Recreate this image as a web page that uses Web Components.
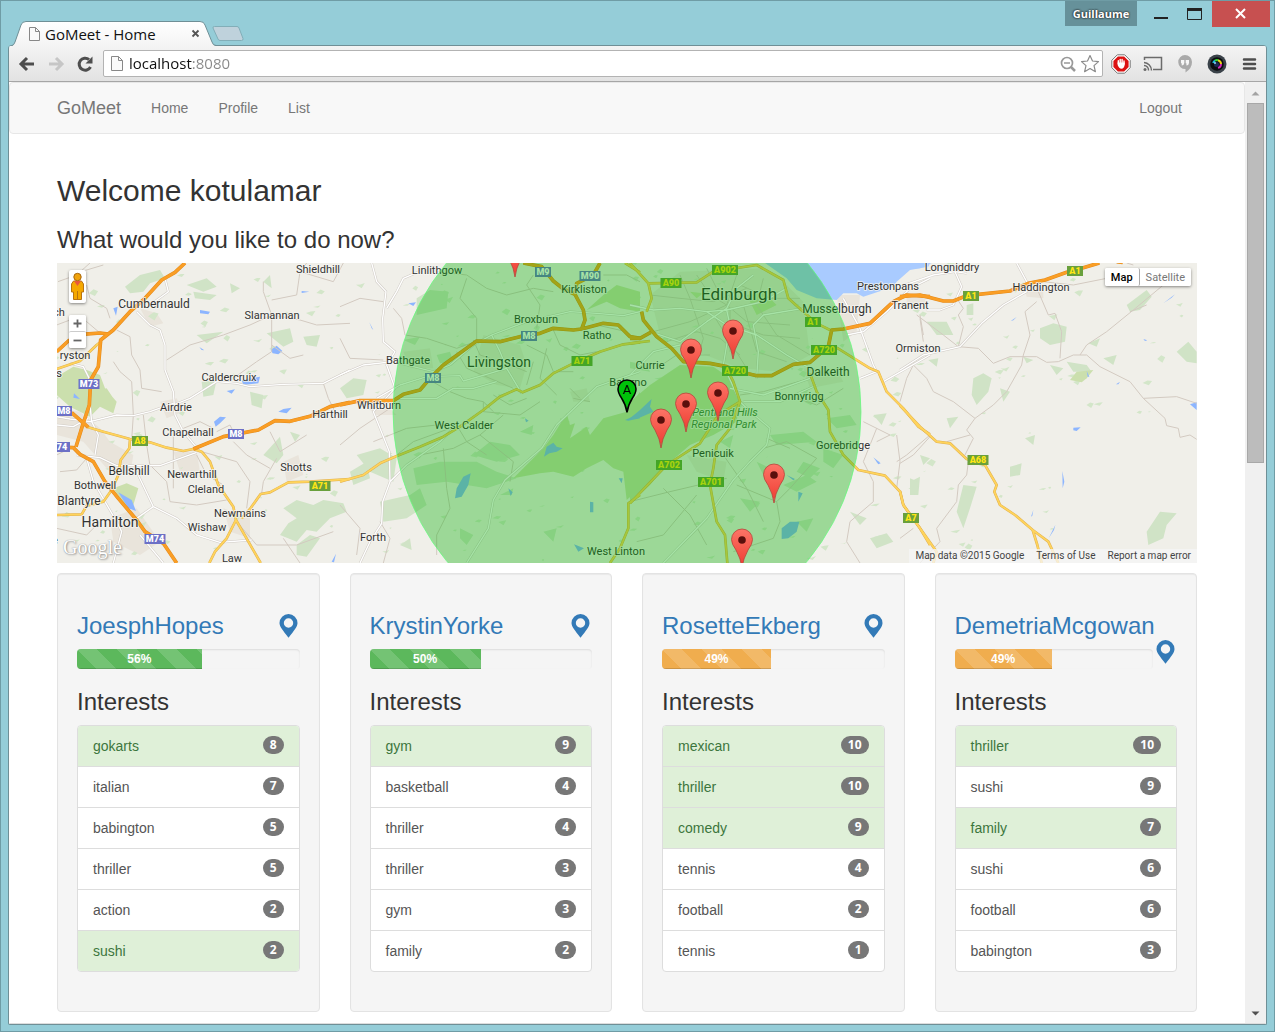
<!DOCTYPE html>
<html lang="en">
<head>
<meta charset="utf-8">
<title>GoMeet - Home</title>
<style>
  html, body { margin: 0; height: 100%; }
  body { font: 14px/20px "Liberation Sans", Arial, sans-serif; color: #333; background: #95cdd8; }
</style>
</head>
<body>
<browser-window tab-title="GoMeet - Home" user="Guillaume" address="localhost:8080">
  <site-navbar></site-navbar>
  <home-page></home-page>
</browser-window>

<script>
function component(name, css, html, setup) {
  const template = document.createElement('template');
  template.innerHTML = '<style>*{box-sizing:border-box}' + css + '</style>' + html;
  customElements.define(name, class extends HTMLElement {
    constructor() {
      super();
      this.attachShadow({ mode: 'open' }).append(template.content.cloneNode(true));
    }
    connectedCallback() { if (setup) setup.call(this, this.shadowRoot); }
  });
}

/* ---------- browser frame ---------- */

component('tab-strip', `
  :host { display: flex; align-items: flex-end; height: 45px; padding-left: 11px; padding-right: 4px; }
  .tab { display: grid; width: 204px; height: 25px; margin-bottom: -1px; position: relative; z-index: 1; }
  .tab > * { grid-area: 1 / 1; }
  .label { display: flex; align-items: center; padding: 0 16px; font: 15px/20px "Open Sans", sans-serif; color: #111; }
  .label svg { flex: none; }
  .label span { flex: 1; padding-left: 4px; white-space: nowrap; }
  button { border: 0; padding: 0; background: none; display: block; }
  .new { margin: 0 auto 4px -4px; }
  .controls { display: flex; align-self: flex-start; align-items: flex-start; }
  .user { height: 25px; width: 72px; background: #66919a; color: #fff; font: bold 11px/25px "Open Sans", sans-serif;
    text-shadow: 0 0 2px #222, 0 0 2px #222; text-align: center; }
  .win { width: 34px; height: 26px; }
  .controls .min { margin-left: 7px; }
  .close { width: 58px; height: 26px; background: #c75050; }
  .x { width: 9px; height: 20px; }
`, `
  <div class="tab">
    <svg width="204" height="25" viewBox="0 0 204 25">
      <defs><linearGradient id="g" x2="0" y2="1"><stop stop-color="#fff"/><stop offset="1" stop-color="#f4f4f4"/></linearGradient></defs>
      <path d="M0 25Q2 24 3 21L9 4Q10 .5 14 .5H188Q192 .5 193 4L200 21Q201 24.500 204 25Z" fill="url(#g)"/>
      <path d="M0 24.500Q2 24 3 21L9 4Q10 .5 14 .5H188Q192 .5 193 4L200 21Q201 24.500 204 24.500" fill="none" stroke="#6f8f96"/>
    </svg>
    <div class="label">
      <svg width="13" height="16" viewBox="0 0 13 16"><path d="M1.500 1.500H7.500L11.500 5.500V14.500H1.500Z" fill="#fafafa" stroke="#888"/><path d="M7.500 1.500V5.500H11.500" fill="none" stroke="#888"/></svg>
      <span></span>
      <button class="x" aria-label="Close tab"><svg width="9" height="9" viewBox="0 0 9 9"><path d="M1.500 1.500L7.500 7.500M7.500 1.500L1.500 7.500" stroke="#555" stroke-width="1.800"/></svg></button>
    </div>
  </div>
  <button class="new" aria-label="New tab"><svg width="32" height="15" viewBox="0 0 32 15" style="display:block"><path d="M2.500 .5H25Q26.500 .5 27 2L31 12.500Q31.500 14.500 29.500 14.500H8Q6.500 14.500 6 13L1 2Q.5 .5 2.500 .5Z" fill="#bfd2dc" stroke="#82aeb8"/></svg></button>
  <div class="controls">
    <button class="user"></button>
    <button class="win min" aria-label="Minimize"><svg width="34" height="26"><path d="M10 17H24" stroke="#222" stroke-width="2"/></svg></button>
    <button class="win max" aria-label="Maximize"><svg width="34" height="26"><path d="M9.500 18.500V8H23.500V18.500Z" fill="none" stroke="#222"/><path d="M9 8.500H24" stroke="#222" stroke-width="3"/></svg></button>
    <button class="close" aria-label="Close"><svg width="58" height="26"><path d="M24 8L33 17M33 8L24 17" stroke="#fff" stroke-width="2"/></svg></button>
  </div>
`);

component('tool-bar', `
  :host { display: flex; align-items: center; gap: 12px; height: 37px; padding: 0 7px 0 8px;
    background: linear-gradient(#f4f4f4, #e2e2e2); border: 1px solid #6f8f96; border-width: 1px 0; border-bottom-color: #a6a6a6; }
  button { border: 0; padding: 0; background: none; width: 20px; height: 20px; flex: none; }
  svg { display: block; }
  .nav { display: flex; gap: 9px; margin-right: -4px; }
  label { flex: 1; display: flex; align-items: center; gap: 2px; height: 27px; margin-right: -4px; padding: 0 2px 0 6px; background: #fff; border: 1px solid #b3b3b3; border-radius: 2px; }
  input { flex: 1; min-width: 0; border: 0; padding: 0 0 2px 3px; outline: 0; height: 24px; font: 15px/22px "Open Sans", sans-serif;
    background: linear-gradient(90deg, #111 66px, #888 66px) text; color: transparent; }
`, `
  <div class="nav">
    <button aria-label="Back"><svg width="20" height="20"><path d="M17 10H4M10 4L4 10L10 16" fill="none" stroke="#4e4e4e" stroke-width="3"/></svg></button>
    <button aria-label="Forward"><svg width="20" height="20"><path d="M3 10H16M10 4L16 10L10 16" fill="none" stroke="#c6c6c6" stroke-width="3"/></svg></button>
    <button aria-label="Reload"><svg width="20" height="20"><path d="M15.500 13A6 6 0 1 1 14 5.500" fill="none" stroke="#4e4e4e" stroke-width="3"/><path d="M17.500 2.500V9.500H10.500Z" fill="#4e4e4e"/></svg></button>
  </div>
  <label aria-label="Address">
    <svg width="14" height="18" viewBox="0 0 14 18"><path d="M1.500 1.500H8.500L12.500 5.500V15.500H1.500Z" fill="#fafafa" stroke="#888"/><path d="M8.500 1.500V5.500H12.500" fill="none" stroke="#888"/></svg>
    <input type="text">
    <button aria-label="Zoom out"><svg width="20" height="20"><circle cx="9" cy="9" r="5.500" fill="none" stroke="#999" stroke-width="1.700"/><path d="M6 9H12" stroke="#999" stroke-width="1.500"/><path d="M13 13L17 17" stroke="#999" stroke-width="2.500"/></svg></button>
    <button aria-label="Bookmark"><svg width="20" height="20"><path d="M10 1.500L12.500 7L18.500 7.600L14 11.600L15.400 17.700L10 14.500L4.600 17.700L6 11.600L1.500 7.600L7.500 7Z" fill="#fff" stroke="#8b8b8b" stroke-width="1.200" stroke-linejoin="round"/></svg></button>
  </label>
  <button aria-label="Ad blocker"><svg width="20" height="20"><path d="M6.300 .8H13.700L19.200 6.300V13.700L13.700 19.200H6.300L.8 13.700V6.300Z" fill="#fff" stroke="#777"/><path d="M6.900 2.400H13.100L17.600 6.900V13.100L13.100 17.600H6.900L2.400 13.100V6.900Z" fill="#dc1212"/><path d="M7.300 9.500V6.800M9.200 9V5.500M11.100 9V5.500M13 10V7" stroke="#fff" stroke-width="1.400" stroke-linecap="round"/><path d="M6.600 8.500H13.700V11Q13 14.500 10.500 14.700Q8 14.500 6.600 11Z" fill="#fff"/></svg></button>
  <button aria-label="Cast"><svg width="20" height="20"><path d="M1.500 6V3.500H18.500V15.500H10" fill="none" stroke="#6b6b6b" stroke-width="1.500"/><circle cx="2" cy="15.500" r="1.500" fill="#6b6b6b"/><path d="M1 11.500A4.500 4.500 0 0 1 5.500 16.500M1 8.500A8 8 0 0 1 8.500 16.500" fill="none" stroke="#6b6b6b" stroke-width="1.400"/></svg></button>
  <button aria-label="Hangouts"><svg width="20" height="20"><path d="M10 1A7 7 0 0 1 17 8Q17 14.500 10.500 18.500V15A7 7 0 1 1 10 1Z" fill="#aaa"/><path d="M6 6H9.300V9Q9 11.500 6.700 11.500V9.300H6ZM10.700 6H14V9Q13.700 11.500 11.400 11.500V9.300H10.700Z" fill="#f6f6f6"/></svg></button>
  <button aria-label="Camera"><svg width="20" height="20"><circle cx="10" cy="10" r="9.500" fill="#3a4249"/><circle cx="10" cy="10" r="6.800" fill="#0b0d10"/><g fill="none" stroke-width="2"><path d="M6.200 9A4 4 0 0 1 8 6.600" stroke="#18b7d8"/><path d="M8 6.600A4 4 0 0 1 11 6.200" stroke="#35d435"/><path d="M11 6.200A4 4 0 0 1 14 10" stroke="#e8d219"/><path d="M14 10A4 4 0 0 1 11 13.900" stroke="#d629b8"/></g><circle cx="9.500" cy="10.500" r="2.500" fill="#1d2a55"/><circle cx="8" cy="9" r="1" fill="#8fd7ff"/></svg></button>
  <button aria-label="Menu"><svg width="20" height="20"><path d="M5 5.500H16M5 10H16M5 14.500H16" stroke="#4e4e4e" stroke-width="2.500" stroke-linecap="round"/></svg></button>
`);

component('page-scrollbar', `
  :host { display: flex; flex-direction: column; width: 21px; padding: 1px 2px 0; background: #f0f0f0; }
  button { border: 0; padding: 0; height: 20px; background: none; flex: none; }
  svg { display: block; margin: auto; }
  .track { flex: 1; }
  .thumb { height: 40%; background: #bcbcbc; border: 1px solid #a8a8a8; }
`, `
  <button aria-label="Scroll up"><svg width="9" height="5"><path d="M.5 4.500L4.500 .5L8.500 4.500Z" fill="#a3a3a3"/></svg></button>
  <div class="track"><div class="thumb"></div></div>
  <button aria-label="Scroll down"><svg width="9" height="5"><path d="M.5 .5H8.500L4.500 4.500Z" fill="#505050"/></svg></button>
`);

component('browser-window', `
  :host { display: flex; flex-direction: column; height: 100vh; box-sizing: border-box; border: 1px solid #6f9ca5; padding-bottom: 6px; background: #95cdd8; }
  tab-strip { margin-top: -1px; padding-top: 1px; box-sizing: border-box; flex: none; }
  .frame { flex: 1; min-height: 0; display: flex; flex-direction: column; margin: 0 7px; border: 1px solid #6f8f96; border-top: 0; border-radius: 4px 4px 2px 2px; overflow: hidden; }
  .view { flex: 1; min-height: 0; display: flex; background: #fff; border-bottom: 1px solid #ddd; }
  .page { flex: 1; min-width: 0; overflow: hidden; }
`, `
  <tab-strip></tab-strip>
  <div class="frame">
    <tool-bar></tool-bar>
    <div class="view"><div class="page"><slot></slot></div><page-scrollbar></page-scrollbar></div>
  </div>
`, function (root) {
  const strip = root.querySelector('tab-strip').shadowRoot, bar = root.querySelector('tool-bar').shadowRoot;
  strip.querySelector('.label span').textContent = this.getAttribute('tab-title');
  strip.querySelector('.user').textContent = this.getAttribute('user');
  bar.querySelector('input').value = this.getAttribute('address');
});

/* ---------- site ---------- */

component('site-navbar', `
  :host { display: block; margin-bottom: 20px; background: #f8f8f8; border: 1px solid #e7e7e7; border-radius: 4px; }
  nav { display: flex; max-width: 1140px; margin: 0 auto; height: 50px; align-items: center; }
  a { color: #777; text-decoration: none; padding: 15px; }
  .brand { font-size: 18px; padding-left: 0; }
  .end { margin-left: auto; }
`, `<nav><a class="brand" href="#">GoMeet</a><a href="#home">Home</a><a href="#profile">Profile</a><a href="#list">List</a><a class="end" href="#logout">Logout</a></nav>`);

component('interest-list', `
  :host { display: block; }
  ul { list-style: none; margin: 0; padding: 0; border: 1px solid #ddd; border-radius: 4px; overflow: hidden; background: #fff; color: #555; }
  li { display: flex; justify-content: space-between; align-items: flex-start; padding: 10px 15px; }
  li + li { border-top: 1px solid #ddd; }
  li.shared { background: #dff0d8; color: #3c763d; }
  .badge { padding: 3px 7px; font: bold 12px/12px "Open Sans", sans-serif; color: #fff; background: #777; border-radius: 10px; }
`, `<ul></ul>`, function (root) {
  const ul = root.querySelector('ul');
  for (const item of this.getAttribute('items').split(',')) {
    const [name, count] = item.split(':');
    const li = document.createElement('li');
    const label = document.createElement('span'), badge = document.createElement('span');
    if (name.startsWith('*')) li.className = 'shared';
    label.textContent = name.replace('*', '');
    badge.textContent = count;
    badge.className = 'badge';
    li.append(label, badge);
    ul.append(li);
  }
});

component('person-card', `
  :host { display: block; background: #f5f5f5; border: 1px solid #e3e3e3; border-radius: 4px; padding: 39px 19px;
    box-shadow: inset 0 1px 1px rgba(0,0,0,.05); }
  h3 { margin: 0 0 10px; font-size: 24px; line-height: 26px; font-weight: normal; }
  a { color: #337ab7; text-decoration: none; }
  .pin { float: right; }
  .pin svg { display: block; }
  .progress { height: 20px; margin-bottom: 20px; overflow: hidden; border-radius: 4px; background: #f5f5f5; box-shadow: inset 0 1px 2px rgba(0,0,0,.1); }
  .bar { height: 20px; color: #fff; text-align: center; font: bold 12px/20px "Liberation Sans", sans-serif; background-color: #5cb85c;
    background-image: linear-gradient(45deg, rgba(255,255,255,.15) 25%, transparent 25%, transparent 50%, rgba(255,255,255,.15) 50%, rgba(255,255,255,.15) 75%, transparent 75%);
    background-size: 40px 40px; box-shadow: inset 0 -1px 0 rgba(0,0,0,.15); }
  .bar.low { background-color: #f0ad4e; }
`, `
  <h3><a class="name" href="#person"></a><a class="pin" href="#map" aria-label="Show on map"><svg width="24" height="25"><path fill-rule="evenodd" d="M12.500 1A9 9 0 0 1 21.500 10C21.500 13.500 18.500 17 12.500 24.800C6.500 17 3.500 13.500 3.500 10A9 9 0 0 1 12.500 1ZM12.500 5.300A4.700 4.700 0 1 0 12.500 14.700A4.700 4.700 0 1 0 12.500 5.300Z" fill="#337ab7"/></svg></a></h3>
  <div class="progress"><div class="bar" role="progressbar" aria-valuemin="0" aria-valuemax="100"></div></div>
  <h3>Interests</h3>
  <slot></slot>
`, function (root) {
  const match = Number(this.getAttribute('match'));
  const bar = root.querySelector('.bar');
  root.querySelector('.name').textContent = this.getAttribute('name');
  bar.textContent = match + '%';
  bar.style.width = match + '%';
  bar.setAttribute('aria-valuenow', match);
  bar.classList.toggle('low', match < 50);
});

/* ---------- map ---------- */

/* Four tiles, each drawn at three units per pixel: x offset and layers. */
const TILES = [
  { x: -7,
    urban: 'M20 460L90 470L150 520L180 560L250 600L240 660L170 640L100 560L20 540ZM270 160L320 175L340 205L300 215ZM330 440L380 430L400 470L350 490ZM180 790L260 760L330 860L270 900L190 860ZM520 760L600 790L600 850L540 830ZM370 590L440 590L450 650L390 650ZM700 620L745 600L760 660L710 680Z',
    wood: 'M225 95L270 60L330 45L345 70L300 85L280 110L240 115ZM410 90L470 70L500 95L460 110ZM430 110L500 120L480 135L435 130ZM455 380L500 375L490 420L460 425ZM600 410L640 420L635 460L605 450ZM640 600L690 545L700 600L680 625ZM700 760L740 735L790 750L820 735L880 745L890 770L840 790L800 830L770 825L740 860L690 840L715 805L740 790ZM740 870L780 840L810 850L770 905L740 900ZM540 85L570 100L545 115ZM640 80L660 60L665 100ZM440 240L520 230L470 265ZM650 235L720 220L730 260L700 275ZM760 245L810 240L800 275L770 270ZM720 530L750 540L735 560Z',
    park: 'M20 365L70 335L110 345L150 360L165 400L200 440L190 475L150 455L120 485L60 455L20 420ZM190 700L230 685L265 700L250 750L220 745ZM130 410L170 400L190 430L150 445Z',
    water: 'M205 712L245 735L258 768L235 760ZM450 165L480 170L475 178L450 175ZM662 285L680 272L697 288L685 298L668 295ZM492 500L510 485L528 487L510 505L497 515ZM685 470L700 462L725 458L710 475ZM575 375L630 365L625 385L580 390ZM530 408L555 403L545 416ZM190 160L203 155L198 182ZM72 415L90 432L70 428ZM755 108L778 110L755 114ZM845 920L858 896L852 922ZM448 276L463 286L455 285Z',
    minor: 'M20 210L60 195L110 200L150 234M110 90L120 130L170 160L180 190M200 225L240 245L245 300L270 345L275 400L335 410M190 320L210 350L245 380L250 480L245 555M350 315L420 270L520 240L600 210L665 180L750 195L800 210L900 205M640 80L640 110L665 180L665 290L620 320L550 370M665 135L740 120L750 50L770 24M750 50L850 80L880 24M665 270L720 310L760 300M820 385L835 430L860 480M500 530L540 510L560 550M400 520L450 500L490 520M550 560L590 600L660 640M660 530L690 590L770 540M680 610L640 680L635 715M440 600L470 660L520 690M20 600L60 580M30 650L80 645L110 610M280 480L290 570L300 632M370 530L370 700M455 590L560 620L600 680L590 760M560 800L620 870L740 870L850 830M20 720L90 740M20 820L110 840L150 800M300 630L350 680L360 740L440 750L530 735M700 850L750 924M60 60L160 30M24 80L80 60L120 24',
    white: 'M260 170L300 210L330 225L345 270L345 345L370 410L375 480L400 530L450 590M370 450L420 430L500 380L560 385L600 395L700 388L820 385L900 345M20 485L60 492L120 500L200 480L250 482L300 470L370 445M20 510L70 515L115 490M80 600L150 608L200 632L330 632L440 592M120 450L125 500L145 540L135 600M110 610L130 680L165 740L200 800L215 830L190 924M260 790L310 755L380 790L440 840L510 862L605 855M270 840L340 924M260 650L310 755M60 325L100 335L120 375M345 70L355 110L300 150',
    yellow: 'M115 517L160 530L240 552L300 562L350 578L400 588L430 582L455 590L480 620L505 690L550 755L558 795L530 850L495 890L478 924M558 795L632 924M575 790L600 762L632 717L660 712L715 682L780 680L900 672M240 552L238 580L212 615L205 660L185 705L160 740L110 752L95 778L20 780M20 342L90 318L140 270L155 258',
    orange: 'M405 24L375 52L335 75L285 130L240 170L190 225L152 255L145 335L122 375L118 450L98 510L78 575M20 290L55 258L95 238L150 234L175 237M65 473L115 517M430 582L520 545L625 525L675 497L720 499L780 484L840 455L900 442M50 577L70 578L90 598L130 620L165 680L205 730L260 795L285 830L340 865L380 924' },
  { x: 283,
    urban: 'M430 240L540 270L560 330L540 400L470 390L400 350ZM60 440L140 450L170 480L110 480ZM690 410L740 400L750 440L700 440ZM190 290L270 280L280 340L210 340Z',
    wood: 'M230 130L270 105L325 110L320 160L230 180ZM0 400L40 370L80 375L70 420L20 430ZM50 600L120 580L170 610L160 680L90 650ZM220 640L300 620L410 620L470 650L530 670L440 700L320 680L230 690ZM400 600L450 560L510 570L540 600L470 620ZM120 740L210 720L240 700L260 750L200 790L130 800ZM30 650L80 620L90 670L40 690ZM290 300L330 290L340 320L300 325ZM190 255L240 245L225 270ZM540 530L580 510L575 540ZM360 820L400 840L380 870L360 850ZM610 830L650 820L640 860ZM180 870L210 850L215 885ZM660 490L690 500L670 520ZM480 720L520 700L515 720Z',
    park: 'M520 670L610 580L640 540L680 475L690 510L705 505L690 550L740 515L750 540L790 490L860 470L900 410L900 700L860 735L850 650L820 640L790 615L740 640L700 665L640 650L600 655ZM740 165L790 120L830 90L900 110L900 170L840 160L800 140Z',
    water: 'M345 730L350 700L370 665L392 655L385 690L365 725ZM612 605L620 575L640 563L650 575L668 580L650 590L628 595ZM205 145L228 142L220 153ZM505 700L518 712L512 723ZM750 740L760 742L760 772L750 772ZM702 868L732 880L715 890ZM836 670L848 670L845 685ZM88 202L100 225L95 220ZM555 490L566 497L558 502ZM855 495L895 478L900 490L865 497Z',
    minor: 'M0 155L60 130L130 140M160 160L185 190L195 240L260 250L350 280L420 255M0 250L30 310L130 315M290 50L380 60L440 100L500 120L580 100L640 110M380 70L360 130L410 190L410 255M580 60L560 90L600 150L590 220M640 225L660 270L720 300L770 290M400 255L420 300L510 330L560 350M350 290L380 340L450 370L520 400M260 370L330 410L380 430L430 440L460 470M560 270L620 300L640 350L700 350M580 320L560 390M620 280L600 370L650 420M430 440L430 470L540 480L600 440M460 420L510 450L560 430M0 570L60 520L180 440M100 560L200 520L290 510M170 600L220 560L330 520M240 600L340 580L420 540L490 480M350 510L380 560L440 600M310 580L320 700L330 760L290 840L290 900M0 750L60 820L50 900M120 800L150 850L130 924M420 540L520 620L510 680M720 430L690 400M770 210L860 230M700 430L750 440M790 60L860 60L900 80',
    white: 'M95 24L110 80L138 110L128 190L130 260L165 290L140 330L165 400L100 470L120 520L148 590L150 680L128 740L125 805L90 860L60 924M140 160L170 110L190 70L260 40M0 360L70 330L160 320L280 350L330 330L400 270L455 240L560 200L690 170L770 175L850 182L900 170M455 240L480 290L500 340L545 415M110 430L180 390L260 365L360 362L370 378L450 355L500 340M165 430L290 430L340 400L400 400L470 380M380 924L445 820L460 735L495 675L605 580L650 510L770 395L900 350M150 680L200 630L300 560L340 520',
    yellow: 'M0 680L70 660L120 625L165 605L240 575L310 545L360 515L430 465L480 425L530 403L548 412L600 390L640 355L700 325L780 290L850 268L900 262M810 924L840 880L865 820L865 745L900 720M855 24L900 52',
    orange: 'M0 450L60 437L160 437L190 418L240 405L270 370L310 330L410 258L480 260L540 245L600 235L640 220L700 225L725 222L735 195L730 165L705 118L710 85L760 60L780 24M550 24L605 35L640 78L670 102L705 118M725 222L790 205L835 210L870 245L900 250' },
  { x: 573,
    sea: 'M405 24L900 24L895 35L840 45L800 80L790 95L700 125L680 115L640 115L620 135L560 130L500 105L470 70Z',
    urban: 'M150 50L400 40L470 90L520 140L540 300L450 350L330 340L200 290L90 240L60 120ZM520 340L620 340L640 380L540 400ZM620 120L690 120L680 230L640 260ZM170 600L290 620L280 680L200 650Z',
    wood: 'M0 320L50 330L60 350L0 340ZM50 480L100 470L90 520ZM590 490L660 480L680 510L620 520ZM420 540L520 530L560 560L440 570ZM580 580L640 600L610 640L580 620ZM520 620L570 640L540 670L500 650ZM460 690L530 660L560 680L500 710ZM330 730L390 740L360 770ZM720 850L770 835L790 860L740 880ZM840 680L870 665L865 720L840 720ZM730 480L770 475L755 510ZM660 770L710 790L690 810ZM380 620L420 640L400 660ZM500 800L550 790L530 830ZM270 560L310 540L300 580Z',
    park: 'M0 440L60 390L150 330L250 335L300 370L330 430L320 500L250 540L180 570L110 630L60 690L0 745ZM350 120L400 110L440 150L380 180ZM180 110L220 115L200 130Z',
    water: 'M455 820L480 800L508 800L500 830L475 850L455 852ZM470 660L495 672L490 676ZM505 710L518 715L505 740ZM0 490L30 465L65 432L60 455L70 470L20 492ZM730 607L752 625L745 628Z',
    minor: 'M60 120L150 130L250 140L350 100M70 230L180 200L290 150L320 60M110 260L200 230L270 250L330 300M150 60L180 130L220 250L200 320M200 60L240 120L290 150L350 200L480 210M230 40L260 100M300 160L300 290M330 90L420 130L510 130M340 150L380 290L470 320M400 70L380 150L440 240L540 300M290 200L400 240L510 250M250 180L350 340M80 340L140 300L240 300M400 580L470 560L560 610L480 700L440 740M320 690L440 740L450 800L430 850L310 890M500 430L560 450L640 400M410 550L480 580M100 700L180 780L230 870M0 740L120 710L290 670M20 860L100 840L200 720M740 520L700 620L730 680L730 740L660 800L650 860L690 924M800 620L830 600L900 540M870 180L880 240M800 540L810 620L800 700M330 420L400 410L540 370M700 500L780 540L740 560M400 800L350 700L280 600',
    white: 'M0 150L70 165L150 160L230 170L290 165L400 140L470 100M60 230L150 260L230 200L290 160L320 100L370 60M290 165L300 210L280 330L330 440L350 460L420 520L410 570L360 620L310 675L230 790L100 924M230 170L290 210L380 240L470 300L540 340M380 370L385 290L370 210L400 180L520 160M300 400L400 420L540 370M640 130L690 220L730 330L740 350L690 370M650 240L700 230L770 170L840 100L900 70M760 380L830 340L900 300M0 360L70 290L150 270M340 440L450 440L560 390',
    yellow: 'M0 24L55 85L200 82L250 50L380 30L460 75L475 130L520 170L560 205L600 225M55 85L65 130L50 170M620 278L720 340L745 350L770 410L820 460L865 515L900 538M540 355L560 410L595 465L600 530L640 600L685 645L765 662L810 710L820 750L870 820L900 870M0 745L110 630L210 565L265 480L330 440L310 380L290 340M330 440L300 520L260 570L250 640L240 690L260 800L285 840L292 924M0 265L60 258',
    orange: 'M35 170L40 195L80 245L125 280L160 320L240 325L290 335L330 350L380 362L425 362L490 328L540 322L595 275L605 225L640 222L720 205L790 140L830 120L900 125M0 250L30 250L62 232' },
  { x: 843,
    sea: 'M0 24L95 24L60 40L0 42Z',
    urban: 'M370 90L430 95L430 130L380 125ZM20 120L80 120L70 160L20 160Z',
    wood: 'M420 220L460 205L500 215L495 260L450 270L420 250ZM680 150L740 105L755 125L720 165L690 170ZM220 370L250 355L275 370L265 410L230 450L215 420ZM190 690L230 695L210 760L190 820L170 770ZM330 635L365 625L360 660L330 665ZM740 830L780 770L830 775L800 810L790 850L745 870ZM830 290L865 260L890 290L890 325L860 320ZM565 265L600 250L590 275ZM200 150L220 145L220 180L200 180ZM85 315L115 310L110 335ZM370 305L400 315L380 325ZM30 670L55 680L50 720L30 710ZM140 490L175 485L150 520ZM375 550L405 540L400 570ZM80 200L140 200L160 240L110 240ZM500 320L560 330L575 350L520 350ZM450 330L490 340L470 360ZM610 310L650 300L640 330ZM60 600L90 610L70 630ZM300 400L330 410L310 440Z',
    park: 'M510 375L530 350L580 345L560 370L545 382Z',
    water: 'M520 518L542 517L530 528L520 526ZM870 448L890 442L890 465ZM332 198L350 186L340 196ZM790 145L825 118L815 128ZM560 348L568 365L563 365ZM487 648L493 680L488 700ZM393 785L400 765L397 782ZM446 850L466 810L462 825ZM730 252L742 256L735 258ZM648 388L660 380L655 388Z',
    minor: 'M50 180L130 240L175 275M170 130L190 160L175 180L190 215L175 275L235 280L280 325L330 305L410 305L440 322L475 320L520 300L560 300L600 335L690 380L730 430L795 490L800 512L835 520L840 547L870 540L890 553M730 430L830 425L890 445M410 140L375 170L390 240L370 300L365 330L320 410L280 450L225 490L200 525L220 550L195 600M40 330L80 370L100 410L160 440L225 490M415 110L445 180L465 175L485 230L480 310M540 300L560 270L620 230L700 165L790 90M690 170L740 150M0 440L20 370L40 330M210 540L140 560M90 545L40 600L0 625M205 620L200 660L175 690L170 740L110 820L120 860L60 924M0 850L40 820M60 190L70 260M430 80L520 90L620 70M680 24L700 30',
    white: 'M350 24L380 80L380 110L310 150L245 205L180 275L70 300L0 345M165 50L185 95L160 150L120 165L80 165M0 95L100 60L165 50L200 55',
    yellow: 'M0 452L60 515L110 560L150 565L200 612L255 630L290 690L283 710L300 750L345 780L398 825L445 860L475 924M398 825L412 870L425 924M0 708L10 750L60 820L110 890L100 924',
    orange: 'M0 125L60 120L130 138L160 138L200 122L330 108L385 85L435 75L500 52L550 38L598 24M650 20L668 22' }
];

/* Town names: text, centre x, baseline y, font size. */
const TOWNS = [
  ['Shieldhill',261,10],['Linlithgow',380,11],['Kirkliston',527,30],['Cumbernauld',97,45,12],['Slamannan',215,56],['Broxburn',479,60],
  ['Ratho',540,76],['Livingston',442,104,14],['Bathgate',351,101],['Caldercruix',172,118],['Airdrie',119,148],['Whitburn',322,146],
  ['Harthill',273,155],['Chapelhall',131,173],['West Calder',407,166],['Shotts',239,208],['Bellshill',72,212,12],['Newarthill',135,215],
  ['Bothwell',38,226],['Cleland',149,230],['Blantyre',22,242,12],['Newmains',183,254],['Hamilton',53,264,14],['Wishaw',150,268],
  ['Forth',316,278],['Law',175,299],['Edinburgh',682,37,17],['Currie',593,106],['Balerno',571,123],['Musselburgh',780,50,12],
  ['Prestonpans',831,27],['Tranent',853,46],['Longniddry',895,8],['Haddington',984,28],['Ormiston',861,89],['Dalkeith',771,113,12],
  ['Bonnyrigg',742,137],['Gorebridge',786,186],['Penicuik',656,194],['West Linton',559,292],['ryston',18,96],['ch',2,53],['s',2,114],['e',-2,281]
];

/* Road shields: text, centre x, centre y. */
const SHIELDS = [
  ['M73',32,121],['M8',7,148],['M8',179,171],['74',5,184],['M74',98,276],['M9',486,9],['M90',533,13],['M8',472,73],['M8',376,115],
  ['A8',83,178],['A71',263,223],['A71',525,98],['A90',614,20],['A902',668,7],['A720',767,87],['A720',678,108],['A1',756,59],
  ['A702',612,202],['A701',654,219],['A7',854,255],['A1',914,33],['A1',1018,8],['A68',921,197]
];

const PINS = [[458,14],[676,96],[634,115],[661,158],[629,169],[604,185],[717,240],[685,305]];

/* Small patches of woodland strewn between the large ones. */
function scatter() {
  let seed = 11, d = '';
  const rnd = () => (seed = (seed * 16807) % 2147483647) / 2147483647;
  for (let i = 0; i < 330; i++) {
    const x = rnd() * 1140, y = rnd() * 300, s = 1 + rnd() * 4;
    if ((x > 700 && x < 880 && y < 40) || (x > 1020 && y > 150)) continue;
    d += `M${(x - s).toFixed(1)} ${y.toFixed(1)}L${x.toFixed(1)} ${(y - s * rnd()).toFixed(1)}L${(x + s).toFixed(1)} ${(y - s * .4).toFixed(1)}L${(x + s * .3).toFixed(1)} ${(y + s * rnd()).toFixed(1)}Z`;
  }
  return d;
}

function mapDrawing() {
  const layer = (key, attrs) => TILES.map(t => t[key] ? `<path transform="translate(${t.x} -8) scale(.33333)" d="${t[key]}" ${attrs}/>` : '').join('');
  const line = (key, color, width) => layer(key, `fill="none" stroke="${color}" stroke-width="${width}" stroke-linejoin="round"`);
  const town = ([text, x, y, size = 11]) => `<text x="${x}" y="${y}" font-size="${size}" text-anchor="middle">${text}</text>`;
  const shield = ([text, x, y]) => {
    const w = text.length * 5 + 6, blue = text[0] !== 'A';
    return `<rect x="${x - w / 2}" y="${y - 5}" width="${w}" height="10" fill="${blue ? '#6c70c6' : '#69a03c'}"/>` +
      `<text x="${x}" y="${y + 3}" font-size="9" font-weight="900" text-anchor="middle" fill="${blue ? '#fff' : '#ffe614'}">${text}</text>`;
  };
  const pin = ([x, y]) => `<path transform="translate(${x} ${y})" d="M0 0Q-1 -9 -6 -18Q-10.500 -24 -10.500 -28.500A10.500 10.500 0 0 1 10.500 -28.500Q10.500 -24 6 -18Q1 -9 0 0Z" fill="url(#pin)" stroke="#b8423a" stroke-width=".8"/><circle cx="${x}" cy="${y - 28}" r="3.800" fill="#5b0f0c"/>`;
  return `<svg viewBox="0 0 1140 300" preserveAspectRatio="xMidYMid slice" font-family="Roboto, sans-serif" role="img" aria-label="People near you">
    <defs><linearGradient id="pin" x2="0" y2="1"><stop stop-color="#fd7567"/><stop offset="1" stop-color="#ee3b30"/></linearGradient></defs>
    <rect width="1140" height="300" fill="#f0efe9"/>
    ${layer('urban', 'fill="#e9e4db"')}<path d="${scatter()}" fill="#d3e6c9"/>${layer('wood', 'fill="#d0e3c6"')}${layer('park', 'fill="#cbdfad"')}
    ${layer('sea', 'fill="#a9cbff"')}${layer('water', 'fill="#8cb5ff"')}
    ${line('minor', '#d3cac1', 3)}${line('white', '#cfcac4', 7)}${line('white', '#fff', 4)}
    ${line('yellow', '#e0b050', 8)}${line('yellow', '#ffd45c', 5)}${line('orange', '#e28a1c', 11)}${line('orange', '#fa9e25', 8)}
    ${SHIELDS.map(shield).join('')}
    <g fill="#333" stroke="#f6f5f1" stroke-width="2" stroke-opacity=".75" paint-order="stroke" stroke-linejoin="round">${TOWNS.map(town).join('')}
      <g fill="#4f7a4a" font-style="italic"><text x="668" y="153" font-size="11" text-anchor="middle">Pentland Hills</text><text x="667" y="165" font-size="11" text-anchor="middle">Regional Park</text></g></g>
    <circle cx="570" cy="149" r="234" fill="#00b000" fill-opacity=".35" stroke="#5fff7a" stroke-opacity=".7"/>
    ${PINS.map(pin).join('')}
    <path d="M570 149.500Q569 142 564.500 135Q561 130 561 126A9 9 0 0 1 579 126Q579 130 575.500 135Q571 142 570 149.500Z" fill="#00c20a" stroke="#000" stroke-width="1.500"/>
    <text x="570" y="131" font-size="13" text-anchor="middle">A</text>
  </svg>`;
}

component('people-map', `
  :host { display: block; position: relative; height: 300px; overflow: hidden; font: 11px/17px Roboto, sans-serif; }
  svg { display: block; }
  .canvas svg { width: 100%; height: 300px; }
  button { border: 0; padding: 0; background: #fff; font: inherit; color: #777; }
  .box { position: absolute; background: #fff; border-radius: 2px; box-shadow: 0 1px 3px rgba(0,0,0,.45); }
  .left { left: 12px; width: 17px; }
  .pegman { top: 7px; height: 33px; }
  .zoom { top: 52px; }
  .zoom button { display: block; width: 17px; height: 16px; border-radius: 2px; }
  .zoom button + button { border-top: 1px solid #ccc; height: 17px; }
  .zoom svg { margin: auto; }
  .types { top: 5px; right: 6px; display: flex; }
  .types button { height: 18px; padding: 0 6px; border-radius: 2px; }
  .types .on { font-weight: 500; color: #000; border-right: 1px solid #aaa; }
  .google { position: absolute; left: 6px; bottom: 4px; font: 20px/24px "Liberation Serif", serif; color: #fff; text-decoration: none; text-shadow: 0 0 1px #888, 1px 1px 2px #999; }
  .credits { position: absolute; right: 0; bottom: 0; display: flex; gap: 12px; padding: 0 6px; background: rgba(245,245,245,.75); font-size: 10px; line-height: 14px; }
  .credits * { color: #444; text-decoration: none; }
`, `
  <div class="canvas"></div>
  <button class="box left pegman" aria-label="Street View"><svg width="17" height="33" viewBox="0 0 17 33"><path d="M4.500 11H12.500L14.500 14V22H12.500V29.500H4.500V22H2.500V14Z" fill="#f5a800" stroke="#b87412"/><path d="M5 11H12L8.500 16Z" fill="#e8583c"/><path d="M8.500 21V29" stroke="#b87412"/><circle cx="8.500" cy="7" r="3.700" fill="#f0a30c" stroke="#a8660c"/></svg></button>
  <div class="box left zoom">
    <button aria-label="Zoom in"><svg width="9" height="9"><path d="M4.500 .5V8.500M.5 4.500H8.500" stroke="#666" stroke-width="1.800"/></svg></button>
    <button aria-label="Zoom out"><svg width="9" height="9"><path d="M.5 4.500H8.500" stroke="#666" stroke-width="1.800"/></svg></button>
  </div>
  <div class="box types"><button class="on">Map</button><button>Satellite</button></div>
  <a class="google" href="#google">Google</a>
  <div class="credits"><span>Map data ©2015 Google</span><a href="#terms">Terms of Use</a><a href="#report">Report a map error</a></div>
`, function (root) {
  root.querySelector('.canvas').innerHTML = mapDrawing();
});

component('home-page', `
  :host { display: block; max-width: 1140px; margin: 0 auto; padding-top: 20px; }
  h2, h3 { font-weight: normal; margin: 0; }
  h2 { font-size: 30px; line-height: 33px; margin-bottom: 20px; }
  h3 { font-size: 24px; line-height: 26px; margin-bottom: 10px; }
  .people { display: grid; grid-template-columns: repeat(4, minmax(0, 1fr)); gap: 30px; margin-top: 10px; }
`, `
  <h2>Welcome kotulamar</h2>
  <h3>What would you like to do now?</h3>
  <people-map></people-map>
  <div class="people">
    <person-card name="JoesphHopes" match="56"><interest-list items="*gokarts:8,italian:7,babington:5,thriller:5,action:2,*sushi:2"></interest-list></person-card>
    <person-card name="KrystinYorke" match="50"><interest-list items="*gym:9,basketball:4,thriller:4,thriller:3,gym:3,family:2"></interest-list></person-card>
    <person-card name="RosetteEkberg" match="49"><interest-list items="*mexican:10,*thriller:10,*comedy:9,tennis:4,football:2,tennis:1"></interest-list></person-card>
    <person-card name="DemetriaMcgowan" match="49"><interest-list items="*thriller:10,sushi:9,*family:7,sushi:6,football:6,babington:3"></interest-list></person-card>
  </div>
`);
</script>
</body>
</html>
